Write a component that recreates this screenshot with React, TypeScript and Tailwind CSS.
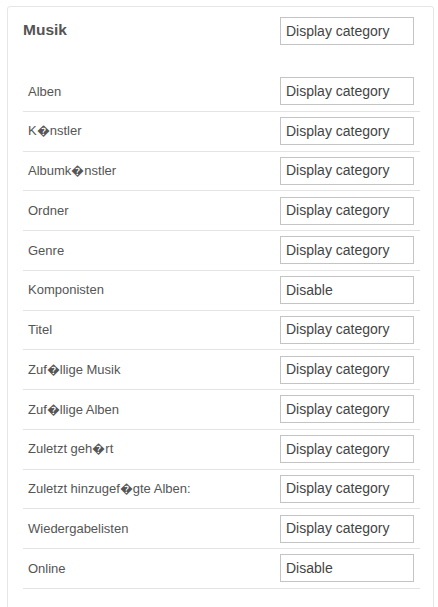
const rows: [string, string][] = [
  ["Alben", "Display category"],
  ["K\uFFFDnstler", "Display category"],
  ["Albumk\uFFFDnstler", "Display category"],
  ["Ordner", "Display category"],
  ["Genre", "Display category"],
  ["Komponisten", "Disable"],
  ["Titel", "Display category"],
  ["Zuf\uFFFDllige Musik", "Display category"],
  ["Zuf\uFFFDllige Alben", "Display category"],
  ["Zuletzt geh\uFFFDrt", "Display category"],
  ["Zuletzt hinzugef\uFFFDgte Alben:", "Display category"],
  ["Wiedergabelisten", "Display category"],
  ["Online", "Disable"],
];

const Box = ({ value }: { value: string }) => (
  <div className="w-[134px] h-[28px] border border-[#c4c4c4] bg-white flex items-center px-[5px] text-[14px] text-[#444]">
    {value}
  </div>
);

const App = () => {
  return (
    <div className="min-h-screen bg-white pt-[6px] pl-[7px] pr-[4px] overflow-hidden" style={{ fontFamily: '"Liberation Sans", Arial, sans-serif' }}>
      <div className="border border-[#e6e6e6] rounded-[3px] pl-[15px] pr-[19px] pt-[10px] pb-[20px]">
        <div className="flex items-center justify-between h-[28px]">
          <h2 className="text-[15.5px] font-bold text-[#555] -mt-[2px]">Musik</h2>
          <Box value="Display category" />
        </div>
        <div className="mt-[27px]">
          {rows.map(([label, value]) => (
            <div key={label} className="flex items-center justify-between h-[39.75px] border-b border-[#e3e3e3] pl-[5px] -mr-[6px] pr-[6px]">
              <span className="text-[13px] text-[#555]">{label}</span>
              <Box value={value} />
            </div>
          ))}
        </div>
      </div>
    </div>
  );
};

export default App;
